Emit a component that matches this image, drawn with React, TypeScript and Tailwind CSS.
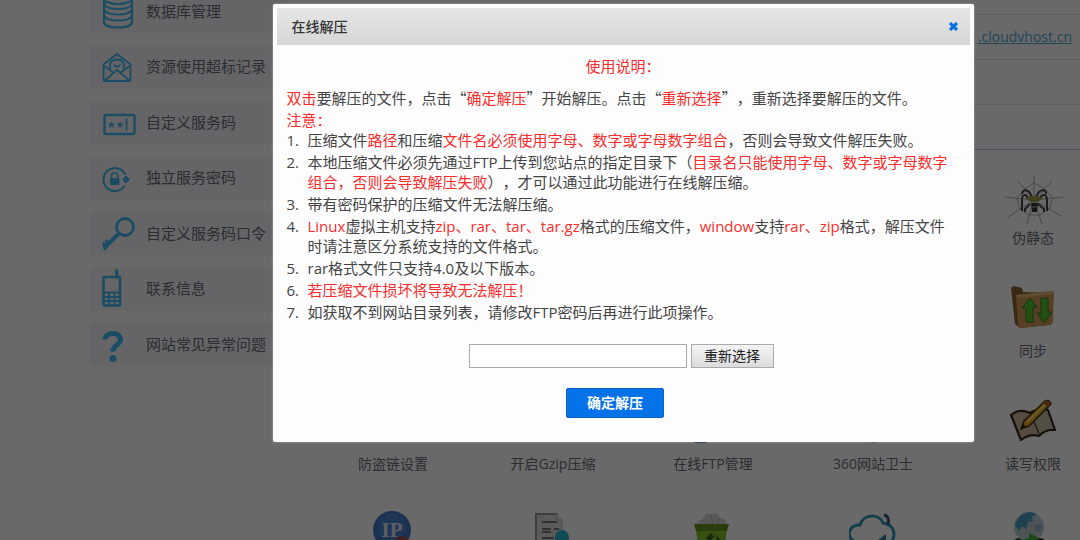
import type { ReactNode } from "react";

const BLUE = "#40b8f0";

const DatabaseIcon = () => (
    <svg className="w-8 h-10 shrink-0 overflow-visible" viewBox="0 0 32 40" fill="none" stroke={BLUE} strokeWidth="2.2">
        <ellipse cx="16" cy="8" rx="14" ry="5" />
        <path d="M2 8v23c0 3.500 6 5.500 14 5.500s14-2 14-5.500V8" />
        <path d="M2 13.500c2 3 7 4.500 14 4.500s12-1.500 14-4.500M2 19c2 3 7 4.500 14 4.500s12-1.500 14-4.500M2 25c2 3 7 4.500 14 4.500s12-1.500 14-4.500" />
    </svg>
);

const MailIcon = () => (
    <svg className="w-8 h-10 shrink-0 overflow-visible" viewBox="0 0 32 40" fill="none" stroke={BLUE} strokeWidth="1.8">
        <path d="M1.500 17.500 15 7l13.500 10.500V33a1 1 0 0 1-1 1h-25a1 1 0 0 1-1-1z" />
        <path d="M2 19l9 6M28 19l-9 6M2.500 33.500 15 23l12.500 10.500" />
        <path d="M8.500 22c-2-7 2-9.500 6.500-9.500s8.500 2.500 6.500 9.500" />
        <path d="M12 17.500c1 3 5 3 6 0" />
    </svg>
);

const CodeIcon = () => (
    <svg className="w-8 h-10 shrink-0 overflow-visible" viewBox="0 0 32 40" fill="none" stroke={BLUE} strokeWidth="2.4">
        <rect x="2.500" y="13" width="30" height="19" rx="1.500" />
        <path d="M24.500 16.500v12" strokeWidth="1.800" />
        <path d="M9.500 19l1 2.500h2.700l-2.100 1.700.8 2.800-2.400-1.600L7.100 26l.8-2.800-2.100-1.700h2.700zM18 19l1 2.500h2.700l-2.100 1.700.8 2.800-2.400-1.600-2.400 1.600.8-2.800-2.100-1.700H17z" fill={BLUE} stroke="none" />
    </svg>
);

const LockIcon = () => (
    <svg className="w-8 h-10 shrink-0 overflow-visible" viewBox="0 0 32 40" fill="none" stroke={BLUE} strokeWidth="2">
        <path d="M22.500 28A11.500 11.500 0 1 1 23.500 17" />
        <path d="M20.500 21.500l3.500-3.500 3.500 3.500-3.500 3.500z" fill={BLUE} strokeWidth="1" />
        <rect x="8" y="20" width="9.500" height="7" rx="1" fill={BLUE} stroke="none" />
        <path d="M9.500 20.500V18a3.200 3.200 0 0 1 6.400 0v2.500" strokeWidth="1.600" />
    </svg>
);

const KeyIcon = () => (
    <svg className="w-8 h-10 shrink-0 overflow-visible" viewBox="0 0 32 40" fill="none" stroke={BLUE} strokeWidth="3">
        <circle cx="23" cy="14" r="8.500" strokeWidth="2.800" />
        <path d="M17 20.500 2 35" strokeWidth="4" />
        <path d="M7 30.500 3.500 27M4 33l-3.500-3M3 33v4" strokeWidth="3" />
    </svg>
);

const PhoneIcon = () => (
    <svg className="w-8 h-10 shrink-0 overflow-visible" viewBox="0 0 32 40" fill="none" stroke={BLUE}>
        <path d="M14.700 1.500V8" strokeWidth="3.200" strokeLinecap="round" />
        <rect x="1.500" y="8" width="16.500" height="28.500" rx="1" strokeWidth="2.600" />
        <path d="M1 23.500h17.500M1 28h17.500M1 32h17.500M7 23v13M12.500 23v13" strokeWidth="1.800" />
    </svg>
);

const QuestionIcon = () => (
    <svg className="w-8 h-10 shrink-0 overflow-visible" viewBox="0 0 32 40" fill="none" stroke={BLUE}>
        <path d="M2.500 15.500C3.500 11.500 7 9.500 11 9.500c4.500 0 7.500 2.500 7.500 6 0 5.500-7.800 5.500-7.800 12" strokeWidth="5" />
        <circle cx="11" cy="34.500" r="3.600" fill={BLUE} stroke="none" />
    </svg>
);

const SpiderIcon = () => (
    <svg className="w-[60px] h-12 overflow-visible" viewBox="0 0 60 48" fill="none">
        <g stroke="#a0a0a0" strokeWidth="0.800">
            <path d="M31 28 1 25M31 28l-17-20M31 28V4M31 28 49 9M31 28l29-3M31 28l27 16M31 28l8 24M31 28l-7 24M31 28 5 45" />
            <path d="M31 11l-9 6-8 9 3 11 9 6h11l9-6 4-11-8-9z" />
        </g>
        <path d="M26 28c-3-7-7-6-7 0v11M29 26c-2-9-9-10-10-4M36 28c3-7 8-6 8 0v11M33 26c2-9 10-10 10-4M27 32l-5 5v3M35 32l6 5v3" stroke="#444" strokeWidth="2" />
        <path d="M22 26l6-2h6l6 2-6 4h-6z" fill="#a59b4a" />
        <path d="M28 31h7l-1 9h-5z" fill="#333" />
        <path d="M29 35h5" stroke="#aaa" strokeWidth="1.200" />
    </svg>
);

const FolderIcon = () => (
    <svg className="w-12 h-12" viewBox="0 0 48 48">
        <path d="M2 3l3-2 8 2 1 4 28 1-2 32-29 3-5-4z" fill="#8b6232" />
        <path d="M7 10l36-4q2 0 2 2l-1 28q0 3-3 4l-29 3q-3 0-3-3z" fill="#d19a58" />
        <path d="M7 10l36-4 1 3-36 4z" fill="#e6bb7c" />
        <path d="M21 13l7 9h-4v15h-7V23h-4zM32 13h7v14h4l-8 11-7-10h4z" fill="#52c42c" stroke="#337a20" />
    </svg>
);

const NotebookIcon = () => (
    <svg className="w-12 h-12" viewBox="0 0 48 48">
        <path d="M2 17q8-7 19-2 8-5 18-3l7 20q-10-1-16 6-9-3-18 4z" fill="#d0b798" stroke="#33291c" strokeWidth="2.200" strokeLinejoin="round" />
        <path d="M22 16q8-4 16-2l6 17q-8-1-14 5z" fill="#c4c1a6" />
        <path d="M22 16l8 20" stroke="#5c4932" strokeWidth="1.500" />
        <path d="M36 3q4-2 6 3L20 28l-8 3 3-8z" fill="#eaa91d" stroke="#4a3518" strokeWidth="1.500" />
        <path d="M18 24 38 5" stroke="#ffe276" strokeWidth="2" />
        <path d="M36 3q4-2 6 3l-3 3-5-4z" fill="#b3672c" />
        <path d="M12 31l2-5 3 3z" fill="#2a2218" />
    </svg>
);

const GlobeIcon = () => (
    <svg className="w-12 h-12" viewBox="0 0 48 48">
        <path d="M1 48l3-17q2-4 6-4h20q7 0 8 6v15z" fill="#33363c" />
        <circle cx="20" cy="16" r="15" fill="#bccbd2" />
        <path d="M6 14Q10 2 21 1l7 2-5 3 1 4-5 1-2 7-4-3-3 5z" fill="#4ba0c8" />
        <path d="M26 14l7-1-2 8-5-2z" fill="#8fb6c5" />
        <path d="M10 30l10-3v-5l10 5-9 7v-4l-9 3z" fill="#3fae2c" />
    </svg>
);

const IpIcon = () => (
    <svg className="w-12 h-12" viewBox="0 0 48 48">
        <circle cx="23" cy="19" r="19" fill="#3f78cc" />
        <circle cx="23" cy="16" r="14" fill="#5a8cd8" opacity="0.500" />
        <text x="23" y="26" textAnchor="middle" fontFamily="Liberation Serif, serif" fontWeight="700" fontSize="21" fill="#e4e4ea">IP</text>
        <path d="M23 31l8-6 8 2-4 12H22z" fill="#a84848" />
    </svg>
);

const DocumentIcon = () => (
    <svg className="w-12 h-12" viewBox="0 0 48 48">
        <path d="M6 2h22l6 7v39H6z" fill="#dadada" />
        <path d="M7 48V3h21" fill="none" stroke="#999" strokeWidth="2" />
        <path d="M28 2v7h6" fill="#ececec" stroke="#aaa" />
        <path d="M13 11h15M13 18h9M25 18h5M13 21h9M13 27h12" stroke="#777" strokeWidth="2" />
        <circle cx="33" cy="26" r="7" fill="#24b6d4" />
    </svg>
);

const BucketIcon = () => (
    <svg className="w-12 h-12" viewBox="0 0 48 48">
        <path d="M7 16q1-7 7-8 2-7 9-5 6-3 8 4 7 0 7 9z" fill="#d4d4d8" />
        <path d="M14 9l5 6M22 4l2 10M31 8l-5 7" stroke="#b4b4b8" />
        <path d="M7 19h31l-4 29H11z" fill="#86c22c" />
        <path d="M5 13h35l-2 7H7z" fill="#669820" />
        <path d="M17 27l5-5 4 5h-3l-2 4zM27 24l5 5-4 3z" fill="#3a641c" />
    </svg>
);

const CloudIcon = () => (
    <svg className="w-12 h-12" viewBox="0 0 48 48" fill="none">
        <path d="M6 31C-4 25 0 14 11 14 14 3 30 2 34 12c10 1 15 12 7 20" stroke="#2d9abc" strokeWidth="3" />
        <path d="M35 4q6 1 4 10" stroke="#3d5a84" strokeWidth="3" />
        <path d="M29 29l8-6v8z" fill="#2d7aa4" />
    </svg>
);

// only the foot of these shows under the dialog
const LinkIcon = () => (
    <svg className="w-12 h-12" viewBox="0 0 48 48">
        <circle cx="22" cy="22" r="18" fill="#6f8fae" />
        <path d="M19 37h7l-3 7z" fill="#444" />
    </svg>
);

const ZipIcon = () => (
    <svg className="w-12 h-12" viewBox="0 0 48 48">
        <path d="M4 4h40v39H4z" fill="#aaa" />
    </svg>
);

const FtpIcon = () => (
    <svg className="w-12 h-12" viewBox="0 0 48 48">
        <path d="M4 4h18v36l-5 5H6l-2-3z" fill="#1c3c8c" />
        <path d="M24 10h14v32H24z" fill="#d8d8d8" />
    </svg>
);

const ShieldIcon = () => (
    <svg className="w-12 h-12" viewBox="0 0 48 48">
        <path d="M6 6l18-5 18 5v18q0 13-18 21Q6 37 6 24z" fill="#cfd3c4" stroke="#999" />
    </svg>
);

const menuItems: { title: string; icon: ReactNode }[] = [
    { title: "数据库管理", icon: <DatabaseIcon /> },
    { title: "资源使用超标记录", icon: <MailIcon /> },
    { title: "自定义服务码", icon: <CodeIcon /> },
    { title: "独立服务密码", icon: <LockIcon /> },
    { title: "自定义服务码口令", icon: <KeyIcon /> },
    { title: "联系信息", icon: <PhoneIcon /> },
    { title: "网站常见异常问题", icon: <QuestionIcon /> },
];

const tools: { title: string; icon: ReactNode; column: string }[] = [
    { title: "伪静态", icon: <SpiderIcon />, column: "col-start-5" },
    { title: "同步", icon: <FolderIcon />, column: "col-start-5" },
    { title: "防盗链设置", icon: <LinkIcon />, column: "col-start-1" },
    { title: "开启Gzip压缩", icon: <ZipIcon />, column: "col-start-2" },
    { title: "在线FTP管理", icon: <FtpIcon />, column: "col-start-3" },
    { title: "360网站卫士", icon: <ShieldIcon />, column: "col-start-4" },
    { title: "读写权限", icon: <NotebookIcon />, column: "col-start-5" },
    { title: "", icon: <IpIcon />, column: "col-start-1" },
    { title: "", icon: <DocumentIcon />, column: "col-start-2" },
    { title: "", icon: <BucketIcon />, column: "col-start-3" },
    { title: "", icon: <CloudIcon />, column: "col-start-4" },
    { title: "", icon: <GlobeIcon />, column: "col-start-5" },
];

const Red = ({ children }: { children: ReactNode }) => <span className="text-[#fb2c2c]">{children}</span>;

// full-width quotation marks
const Quote = ({ children }: { children: ReactNode }) => <span className="font-['Noto_Sans_CJK_SC',sans-serif]">{children}</span>;

const notes: ReactNode[] = [
    <>压缩文件<Red>路径</Red>和压缩<Red>文件名必须使用字母、数字或字母数字组合</Red>，否则会导致文件解压失败。</>,
    <>本地压缩文件必须先通过FTP上传到您站点的指定目录下（<Red>目录名只能使用字母、数字或字母数字组合，否则会导致解压失败</Red>），才可以通过此功能进行在线解压缩。</>,
    <>带有密码保护的压缩文件无法解压缩。</>,
    <><Red>Linux</Red>虚拟主机支持<Red>zip、rar、tar、tar.gz</Red>格式的压缩文件，<Red>window</Red>支持<Red>rar、zip</Red>格式，解压文件时请注意区分系统支持的文件格式。</>,
    <>rar格式文件只支持4.0及以下版本。</>,
    <Red>若压缩文件损坏将导致无法解压！</Red>,
    <>如获取不到网站目录列表，请修改FTP密码后再进行此项操作。</>,
];

const Sidebar = () => (
    <nav className="ml-[90px] -mt-[11px] flex h-[377px] w-[200px] shrink-0 flex-col justify-between">
        {menuItems.map((item) => (
            <a key={item.title} href="#" className="flex h-11 items-center gap-3 bg-[#f6f6fa] pl-3 text-[15px] whitespace-nowrap text-[#6c6c78]">
                {item.icon}
                {item.title}
            </a>
        ))}
    </nav>
);

const Content = () => (
    <main className="ml-[23px] min-w-0 flex-1">
        <div className="h-[15px] border-b border-[#e2e2e2]" />
        <div className="flex h-[45px] items-center justify-end border-b border-[#e2e2e2] pr-2">
            <a href="#" className="text-sm text-[#4eaede] underline">.cloudvhost.cn</a>
        </div>
        <div className="h-[45px] border-b border-[#e2e2e2]" />
        <div className="h-[45px] border-b border-[#b4c6ec]" />
        <div className="grid auto-rows-[113px] grid-cols-[repeat(5,160px)] pt-[22px]">
            {tools.map((tool, index) => (
                <div key={index} className={`${tool.column} flex flex-col items-center gap-2`}>
                    {tool.icon}
                    {tool.title && <span className="text-sm leading-5 text-[#6c6c78]">{tool.title}</span>}
                </div>
            ))}
        </div>
    </main>
);

const UnzipDialog = () => (
    <div role="dialog" aria-label="在线解压" className="w-[701px] rounded-xs bg-[#fdfdfd] p-1 shadow-[0_0_2px_#bbb]">
        <div className="flex h-[37px] items-center justify-between bg-linear-to-b from-[#e6e6e6] to-[#d6d6d6] pr-3 pl-[15px]">
            <h2 className="text-sm font-medium text-[#333]">在线解压</h2>
            <button type="button" aria-label="关闭">
                <svg className="size-[9px]" viewBox="0 0 9 9" stroke="#0b73e0" strokeWidth="3.200">
                    <path d="M1 1l7 7M8 1 1 8" />
                </svg>
            </button>
        </div>
        <div className="px-[10px] pt-[11px] pb-5 text-[15px] leading-5 text-[#444]">
            <h3 className="text-center"><Red>使用说明：</Red></h3>
            <div className="mt-3 flex flex-col gap-0.5">
                <p><Red>双击</Red>要解压的文件，点击<Quote>“</Quote><Red>确定解压</Red><Quote>”</Quote>开始解压。点击<Quote>“</Quote><Red>重新选择</Red><Quote>”</Quote>，重新选择要解压的文件。</p>
                <p><Red>注意：</Red></p>
            </div>
            <ol className="flex flex-col gap-0.5">
                {notes.map((note, index) => (
                    <li key={index} className="flex">
                        <span className="w-[21px] shrink-0">{index + 1}.</span>
                        <span>{note}</span>
                    </li>
                ))}
            </ol>
            <div className="mt-[22px] flex justify-center gap-1 pr-1">
                <input type="text" aria-label="压缩文件" className="h-6 w-[218px] border border-[#aaa] bg-white px-1 text-sm" />
                <button type="button" className="h-6 w-[83px] border border-[#aaa] bg-linear-to-b from-[#f4f4f4] to-[#dcdcdc] text-sm text-[#222]">重新选择</button>
            </div>
            <div className="mt-5 flex justify-center pr-4">
                <button type="submit" className="h-[30px] w-[98px] rounded-xs border border-[#0a62c8] bg-[#0672e8] text-sm font-bold text-white">确定解压</button>
            </div>
        </div>
    </div>
);

const App = () => {
    return (
        <div lang="zh-CN" className="relative h-screen overflow-hidden bg-white font-['Open_Sans','Noto_Sans_CJK_SC',sans-serif] [text-spacing-trim:space-all]">
            <div className="flex items-start">
                <Sidebar />
                <Content />
            </div>
            <div className="absolute inset-0 flex items-start justify-center bg-black/59 pt-1 pl-[166px]">
                <UnzipDialog />
            </div>
        </div>
    );
};

export default App;
